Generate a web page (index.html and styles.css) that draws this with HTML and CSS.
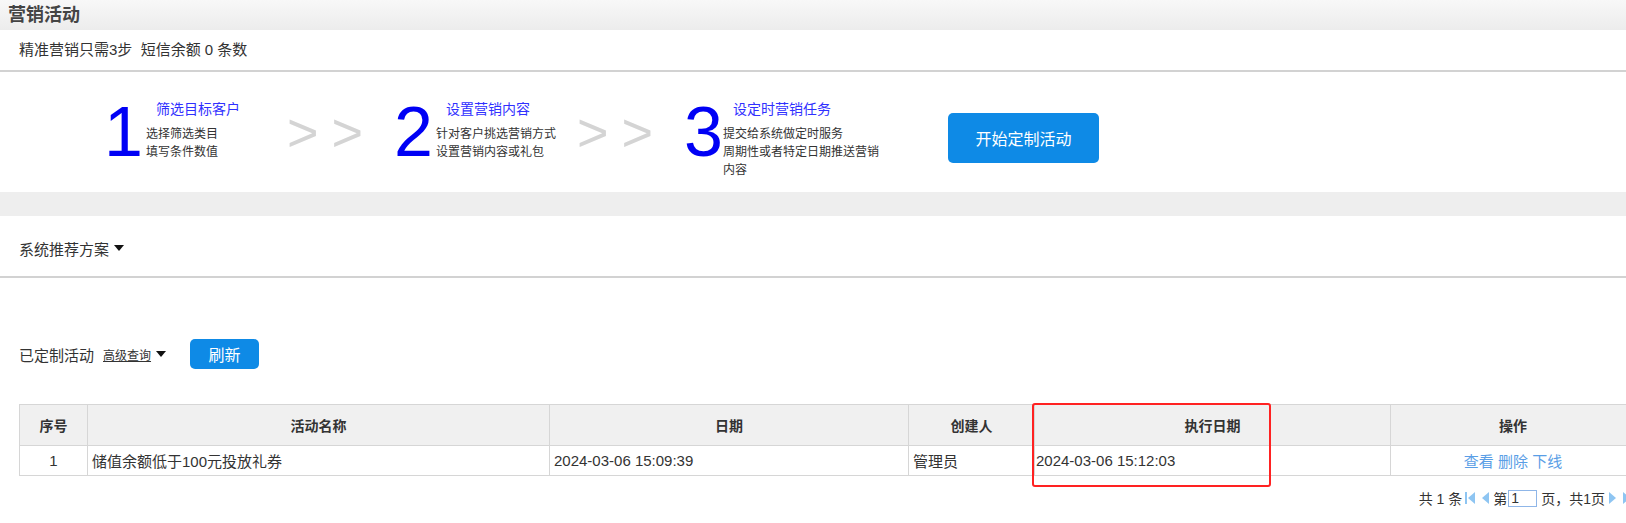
FILE: index.html
```html
<!DOCTYPE html>
<html lang="zh-CN">
<head>
    <meta charset="UTF-8">
    <title>营销活动</title>
    <link rel="stylesheet" href="styles.css">
</head>
<body>
    <div class="page-title">营销活动</div>
    <div class="intro">精准营销只需3步&nbsp;&nbsp;短信余额 0 条数</div>

    <div class="steps">
        <div class="step">
            <span class="step-num">1</span>
            <div class="step-text">
                <div class="step-title">筛选目标客户</div>
                <p>选择筛选类目</p>
                <p>填写条件数值</p>
            </div>
        </div>
        <div class="step-arrow">&gt; &gt;</div>
        <div class="step">
            <span class="step-num">2</span>
            <div class="step-text">
                <div class="step-title">设置营销内容</div>
                <p>针对客户挑选营销方式</p>
                <p>设置营销内容或礼包</p>
            </div>
        </div>
        <div class="step-arrow">&gt; &gt;</div>
        <div class="step step-last">
            <span class="step-num">3</span>
            <div class="step-text">
                <div class="step-title">设定时营销任务</div>
                <p>提交给系统做定时服务</p>
                <p>周期性或者特定日期推送营销内容</p>
            </div>
        </div>
        <button class="btn btn-start">开始定制活动</button>
    </div>

    <div class="band"></div>

    <div class="recommend">系统推荐方案 <span class="caret"></span></div>

    <div class="toolbar">
        <span>已定制活动</span>
        <a class="adv-link">高级查询</a><span class="caret"></span>
        <button class="btn btn-refresh">刷新</button>
    </div>

    <div class="table-wrap">
        <table class="list">
            <thead>
                <tr>
                    <th class="c-no">序号</th>
                    <th class="c-name">活动名称</th>
                    <th class="c-date">日期</th>
                    <th class="c-user">创建人</th>
                    <th class="c-exec">执行日期</th>
                    <th class="c-ops">操作</th>
                </tr>
            </thead>
            <tbody>
                <tr>
                    <td class="center">1</td>
                    <td>储值余额低于100元投放礼券</td>
                    <td>2024-03-06 15:09:39</td>
                    <td>管理员</td>
                    <td class="tight">2024-03-06 15:12:03</td>
                    <td class="center ops"><a>查看</a> <a>删除</a> <a>下线</a></td>
                </tr>
            </tbody>
        </table>
        <div class="mark"></div>
    </div>

    <div class="pager">
        <span>共 1 条</span>
        <svg class="pg-icon" width="11" height="12" viewBox="0 0 11 12"><rect x="0" y="0" width="2" height="12" fill="#8ec5f2"/><path d="M10 0 L3 6 L10 12 Z" fill="#8ec5f2"/></svg>
        <svg class="pg-icon" width="8" height="12" viewBox="0 0 8 12"><path d="M7 0 L0 6 L7 12 Z" fill="#8ec5f2"/></svg>
        <span>第</span><input class="pg-input" type="text" value="1"><span>页，共1页</span>
        <svg class="pg-icon" width="8" height="12" viewBox="0 0 8 12"><path d="M1 0 L8 6 L1 12 Z" fill="#8ec5f2"/></svg>
        <svg class="pg-icon" width="11" height="12" viewBox="0 0 11 12"><path d="M1 0 L8 6 L1 12 Z" fill="#8ec5f2"/><rect x="9" y="0" width="2" height="12" fill="#8ec5f2"/></svg>
    </div>
</body>
</html>
```

FILE: styles.css
```css
body {
    margin: 0;
    overflow: hidden;
    font-family: "Liberation Sans", "Noto Sans CJK SC", sans-serif;
    font-size: 15px;
    color: #333;
    background: #fff;
}
p { margin: 0; }
a { cursor: pointer; }

.page-title {
    height: 30px;
    line-height: 30px;
    padding-left: 8px;
    font-size: 18px;
    font-weight: bold;
    color: #444;
    background: linear-gradient(#f8f8f8, #ececec);
}
.intro {
    height: 40px;
    line-height: 40px;
    padding-left: 19px;
    border-bottom: 2px solid #d2d2d2;
}

.steps {
    display: flex;
    align-items: flex-start;
    height: 95px;
    padding: 25px 0 0 104px;
}
.step {
    display: flex;
    align-items: flex-start;
    width: 183px;
    flex-shrink: 0;
}
.step-last { width: auto; }
.step-num {
    font-family: "Liberation Sans", sans-serif;
    font-size: 70px;
    line-height: 70px;
    color: #0000f5;
}
.step-text {
    margin: 2px 0 0 3px;
    font-size: 12px;
    line-height: 18px;
    white-space: nowrap;
}
.step-last .step-text {
    width: 160px;
    margin-left: 0;
    white-space: normal;
}
.step-title {
    font-size: 14px;
    line-height: 20px;
    margin-bottom: 6px;
    padding-left: 10px;
    color: #3030ff;
}
.step-arrow {
    width: 107px;
    flex-shrink: 0;
    font-size: 54px;
    line-height: 70px;
    letter-spacing: -1px;
    color: #d4d4d4;
    white-space: nowrap;
}

.btn {
    border: 0;
    border-radius: 5px;
    background-color: #0e8ae6;
    color: #fff;
    font-family: inherit;
    font-size: 16px;
    cursor: pointer;
}
.btn-start {
    width: 151px;
    height: 50px;
    margin: 16px 0 0 65px;
}

.band {
    height: 24px;
    background: #eee;
}
.recommend {
    display: flex;
    align-items: center;
    height: 56px;
    padding: 4px 0 0 19px;
    border-bottom: 2px solid #d2d2d2;
}
.caret {
    display: inline-block;
    width: 0;
    height: 0;
    margin-left: 5px;
    border-left: 5px solid transparent;
    border-right: 5px solid transparent;
    border-top: 6px solid #111;
}

.toolbar {
    display: flex;
    align-items: center;
    height: 30px;
    margin-top: 61px;
    padding-left: 19px;
}
.adv-link {
    margin-left: 9px;
    font-size: 12px;
    text-decoration: underline;
    color: #333;
}
.btn-refresh {
    width: 69px;
    height: 30px;
    margin-left: 24px;
}

.table-wrap {
    position: relative;
    margin: 35px 0 0 19px;
    width: 1617px;
}
.list {
    width: 1617px;
    border-collapse: collapse;
    table-layout: fixed;
}
.list th, .list td {
    border: 1px solid #d6d6d6;
    padding: 0 4px;
    text-align: left;
    white-space: nowrap;
}
.list th {
    height: 40px;
    background: #f0f0f0;
    font-size: 14px;
    text-align: center;
}
.list td {
    height: 29px;
}
.list td.center { text-align: center; }
.list td.tight { padding-left: 1px; }
.c-no { width: 59px; }
.c-name { width: 453px; }
.c-date { width: 350px; }
.c-user { width: 117px; }
.c-exec { width: 347px; }
.ops a { color: #5a9ee6; }

.mark {
    position: absolute;
    left: 1013px;
    top: -1px;
    width: 235px;
    height: 80px;
    border: 2px solid #f22;
    border-radius: 3px;
}

.pager {
    display: flex;
    align-items: center;
    justify-content: flex-end;
    width: 1636px;
    height: 22px;
    margin-top: 11px;
    font-size: 14px;
}
.pager span { white-space: nowrap; }
.pg-icon { margin: 0 3px; }
.pg-input {
    width: 23px;
    height: 15px;
    margin: 0 4px 0 1px;
    padding: 0 2px;
    border: 1px solid #8fb6e8;
    font-family: inherit;
    font-size: 14px;
    color: #333;
}
```
